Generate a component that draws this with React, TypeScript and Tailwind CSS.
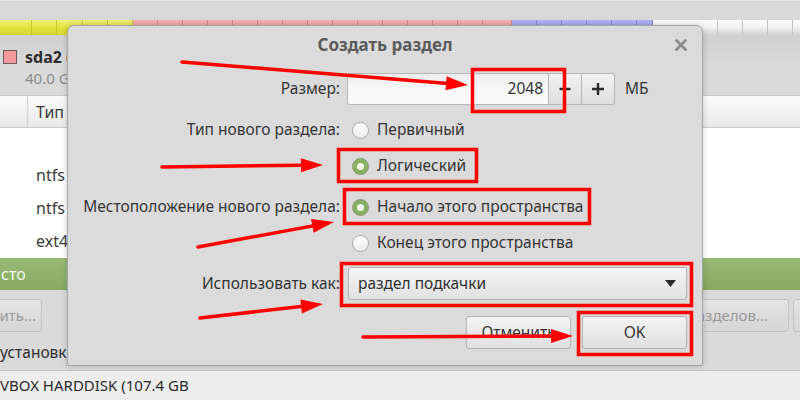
import React from "react";

// partition bar cells: [width, colour]
const BAR_CELLS: [number, string][] = [
  [32, "yellow"], [25, "yellow"], [26, "yellow"], [25, "yellow"], [25, "yellow"],
  [25, "pink"], [25, "pink"], [25, "pink"], [25, "pink"], [25, "pink"], [25, "pink"], [25, "pink"],
  [25, "pink"], [25, "pink"], [25, "pink"], [25, "pink"], [25, "pink"], [25, "pink"], [25, "pink"], [29, "pink"],
  [25, "blue"], [25, "blue"], [25, "blue"], [25, "blue"], [25, "blue"], [16, "blue"],
  [65, "free"], [25, "free"], [25, "free"], [25, "free"], [25, "free"],
];

const CELL_CLASS: Record<string, string> = {
  yellow: "bg-gradient-to-b from-[#f2f27a] via-[#e3e33d] to-[#d6d632] border-[#c9c92e]",
  pink: "bg-gradient-to-b from-[#f8b4b4] via-[#f09a9a] to-[#e58c8c] border-[#d98383]",
  blue: "bg-gradient-to-b from-[#b4b6f4] via-[#9ea1ec] to-[#9093e0] border-[#8588d4]",
  free: "bg-gradient-to-b from-[#fdfdfd] via-[#f0f0f0] to-[#d2d2d2] border-[#c4c4c4]",
};

function Radio({ checked }: { checked?: boolean }) {
  if (checked) {
    return (
      <span className="flex h-[17px] w-[17px] items-center justify-center rounded-full border border-[#8d9a82] bg-[#87b15f]">
        <span className="h-[7px] w-[7px] rounded-full bg-[#f3f6ee]" />
      </span>
    );
  }
  return (
    <span className="h-[17px] w-[17px] rounded-full border border-[#a9a9a9] bg-gradient-to-b from-[#ffffff] to-[#ebebeb]" />
  );
}

function Arrow({ x1, y1, x2, y2 }: { x1: number; y1: number; x2: number; y2: number }) {
  const dx = x2 - x1;
  const dy = y2 - y1;
  const len = Math.hypot(dx, dy);
  const ux = dx / len;
  const uy = dy / len;
  const L = 22;
  const W = 7;
  const bx = x2 - ux * L;
  const by = y2 - uy * L;
  const pts = `${x2},${y2} ${bx - uy * W},${by + ux * W} ${bx + uy * W},${by - ux * W}`;
  return (
    <g>
      <line x1={x1} y1={y1} x2={bx + ux * 2} y2={by + uy * 2} stroke="#ff0000" strokeWidth={3.5} strokeLinecap="round" />
      <polygon points={pts} fill="#ff0000" />
    </g>
  );
}

function Label({ children }: { children?: React.ReactNode }) {
  return <div className="w-[272px] shrink-0 text-right text-[15.5px] text-[#353535]">{children}</div>;
}

function RadioRow({ label, text, checked, className }: { label?: string; text: string; checked?: boolean; className: string }) {
  return (
    <div className={`flex items-center ${className}`}>
      <Label>{label}</Label>
      <div className="ml-[12px] flex items-center">
        <Radio checked={checked} />
        <span className="ml-[8px] text-[15.5px] text-[#353535]">{text}</span>
      </div>
    </div>
  );
}

export default function App() {
  return (
    <div className="relative flex h-[400px] w-[800px] flex-col overflow-hidden bg-[#dadada] font-['Noto_Sans',sans-serif]">
      {/* window top */}
      <div className="h-[20px] shrink-0 border-t border-[#e6e6e6] bg-[#d8d8d8]" />

      {/* partition bar */}
      <div className="flex h-[15px] shrink-0">
        {BAR_CELLS.map(([w, c], i) => (
          <div key={i} className={`h-full shrink-0 border-r ${CELL_CLASS[c]}`} style={{ width: w }} />
        ))}
      </div>

      {/* legend */}
      <div className="h-[60px] shrink-0 bg-gradient-to-b from-[#cfcfcf] via-[#dadada] to-[#dadada]">
        <div className="flex pl-[3px] pt-[14px]">
          <div className="mt-[1px] h-[14px] w-[14px] border border-[#6b5a5a] bg-[#f39a9a]" />
          <div className="ml-[8px] flex flex-col">
            <span className="text-[16px] font-bold leading-[16px] text-[#2d2d2d]">sda2 (ntfs)</span>
            <span className="mt-[5px] text-[15px] leading-[16px] text-[#8c8c8c]">40.0 GB</span>
          </div>
        </div>
      </div>

      {/* table header */}
      <div className="flex h-[33px] shrink-0 border-y border-[#c9c9c9] bg-gradient-to-b from-[#fafafa] to-[#e9e9e9] text-[16px] text-[#3a3a3a]">
        <div className="w-[28px] border-r border-[#cfcfcf]" />
        <div className="flex items-center pl-[8px]">Тип</div>
      </div>

      {/* table rows */}
      <div className="flex h-[130px] shrink-0 flex-col bg-white text-[16px] text-[#3a3a3a]">
        <div className="h-[30px]" />
        <div className="flex h-[33px] items-center pl-[36px]">ntfs</div>
        <div className="flex h-[33px] items-center pl-[36px]">ntfs</div>
        <div className="flex h-[33px] items-center pl-[36px]">ext4</div>
      </div>
      <div className="flex h-[32px] shrink-0 items-center bg-gradient-to-b from-[#98bb76] to-[#86a963] pl-[1px] text-[16px] text-[#f2f7ec]">
        сто
      </div>

      {/* buttons and loader label */}
      <div className="flex h-[80px] shrink-0 flex-col">
        <div className="mt-[9px] flex h-[33px]">
          <div className="-ml-[60px] flex w-[102px] shrink-0 items-center justify-end rounded-[3px] border border-[#c3c3c3] bg-gradient-to-b from-[#e4e4e4] to-[#d6d6d6] pr-[5px] text-[15px] text-[#9a9a9a]">
            Изменить...
          </div>
          <div className="ml-[518px] flex w-[229px] shrink-0 items-center justify-end rounded-[3px] border border-[#c3c3c3] bg-gradient-to-b from-[#e4e4e4] to-[#d6d6d6] pr-[20px] text-[15px] text-[#9a9a9a]">
            Новая таблица разделов...
          </div>
          <div className="ml-[4px] w-[60px] shrink-0 rounded-[3px] border border-[#c3c3c3] bg-gradient-to-b from-[#e4e4e4] to-[#d6d6d6]" />
        </div>
        <div className="mt-[10px] text-[15.5px] leading-[20px] text-[#2f2f2f]">установки загрузчика:</div>
      </div>

      {/* device combo */}
      <div className="flex h-[30px] shrink-0 items-center border-t border-[#c6c6c6] bg-[#ededed] text-[15px] text-[#2a2a2a]">
        VBOX HARDDISK (107.4 GB
      </div>

      {/* dialog */}
      <div className="absolute left-[67px] top-[25px] flex h-[341px] w-[636px] flex-col rounded-t-[7px] border border-[#a6a6a6] bg-[#dbdbdb] shadow-[0_0_6px_rgba(0,0,0,0.18)]">
        <div className="grid h-[38px] grid-cols-[1fr_auto_1fr] items-center">
          <div />
          <div className="text-[17px] font-bold text-[#5b5b5b]">Создать раздел</div>
          <div className="flex justify-end pr-[15px]">
            <svg width="12" height="12" viewBox="0 0 12 12">
              <path d="M1.5 1.5 L10.5 10.5 M10.5 1.5 L1.5 10.5" stroke="#8a8a8a" strokeWidth="2.6" strokeLinecap="round" />
            </svg>
          </div>
        </div>

        <div className="flex flex-col pt-[9px]">
          {/* size */}
          <div className="flex h-[32px] items-center">
            <Label>Размер:</Label>
            <div className="ml-[7px] flex h-[32px]">
              <div className="flex w-[202px] items-center justify-end rounded-l-[3px] border border-[#b7b7b7] bg-gradient-to-b from-[#ededed] via-[#f8f8f8] to-[#fbfbfb] pr-[5px] text-[15.5px] text-[#333]">
                2048
              </div>
              <div className="flex w-[33px] items-center justify-center border border-l-0 border-[#b7b7b7] bg-gradient-to-b from-[#f2f2f2] to-[#dfdfdf]">
                <svg width="12" height="12" viewBox="0 0 12 12">
                  <path d="M0.5 6 H11.5" stroke="#2a2a2a" strokeWidth="2.4" />
                </svg>
              </div>
              <div className="flex w-[33px] items-center justify-center rounded-r-[3px] border border-l-0 border-[#b7b7b7] bg-gradient-to-b from-[#f2f2f2] to-[#dfdfdf]">
                <svg width="14" height="14" viewBox="0 0 14 14">
                  <path d="M1 7 H13 M7 1 V13" stroke="#2a2a2a" strokeWidth="2.4" />
                </svg>
              </div>
            </div>
            <span className="ml-[10px] text-[15.5px] text-[#353535]">МБ</span>
          </div>

          <RadioRow className="mt-[7px] h-[36px]" label="Тип нового раздела:" text="Первичный" />
          <RadioRow className="h-[36px]" text="Логический" checked />
          <RadioRow className="mt-[5px] h-[36px]" label="Местоположение нового раздела:" text="Начало этого пространства" checked />
          <RadioRow className="h-[36px]" text="Конец этого пространства" />

          {/* use as */}
          <div className="mt-[6px] flex h-[33px] items-center">
            <Label>Использовать как:</Label>
            <div className="ml-[8px] flex h-[33px] w-[339px] items-center justify-between rounded-[3px] border border-[#b3b3b3] bg-gradient-to-b from-[#f5f5f5] to-[#e2e2e2] pl-[9px] pr-[10px] text-[15.5px] text-[#2f2f2f]">
              <span>раздел подкачки</span>
              <svg width="11" height="7" viewBox="0 0 11 7">
                <path d="M0 0 H11 L5.5 7 Z" fill="#2a2a2a" />
              </svg>
            </div>
          </div>

          {/* buttons */}
          <div className="mt-[16px] flex h-[33px] justify-end gap-[11px] pr-[15px]">
            <div className="flex w-[105px] items-center justify-center rounded-[3px] border border-[#b3b3b3] bg-gradient-to-b from-[#f4f4f4] to-[#e0e0e0] text-[15.5px] text-[#333]">
              Отменить
            </div>
            <div className="flex w-[105px] items-center justify-center rounded-[3px] border border-[#b3b3b3] bg-gradient-to-b from-[#f4f4f4] to-[#e0e0e0] text-[15.5px] text-[#333]">
              OK
            </div>
          </div>
        </div>
      </div>

      {/* red annotations */}
      <svg className="pointer-events-none absolute left-0 top-0" width="800" height="400" viewBox="0 0 800 400">
        <g fill="none" stroke="#ff0000" strokeWidth="3.5">
          <rect x="472.5" y="69.5" width="92" height="42" />
          <rect x="338.5" y="149.5" width="138" height="32" />
          <rect x="344.5" y="189.5" width="245" height="34" />
          <rect x="341.5" y="263.5" width="350" height="42" />
          <rect x="578.5" y="312.5" width="113" height="42" />
        </g>
        <Arrow x1={182} y1={62} x2={468} y2={85} />
        <Arrow x1={162} y1={167} x2={323} y2={165} />
        <Arrow x1={198} y1={247} x2={334} y2={222} />
        <Arrow x1={200} y1={318} x2={323} y2={304} />
        <Arrow x1={363} y1={337} x2={573} y2={336} />
      </svg>
    </div>
  );
}
